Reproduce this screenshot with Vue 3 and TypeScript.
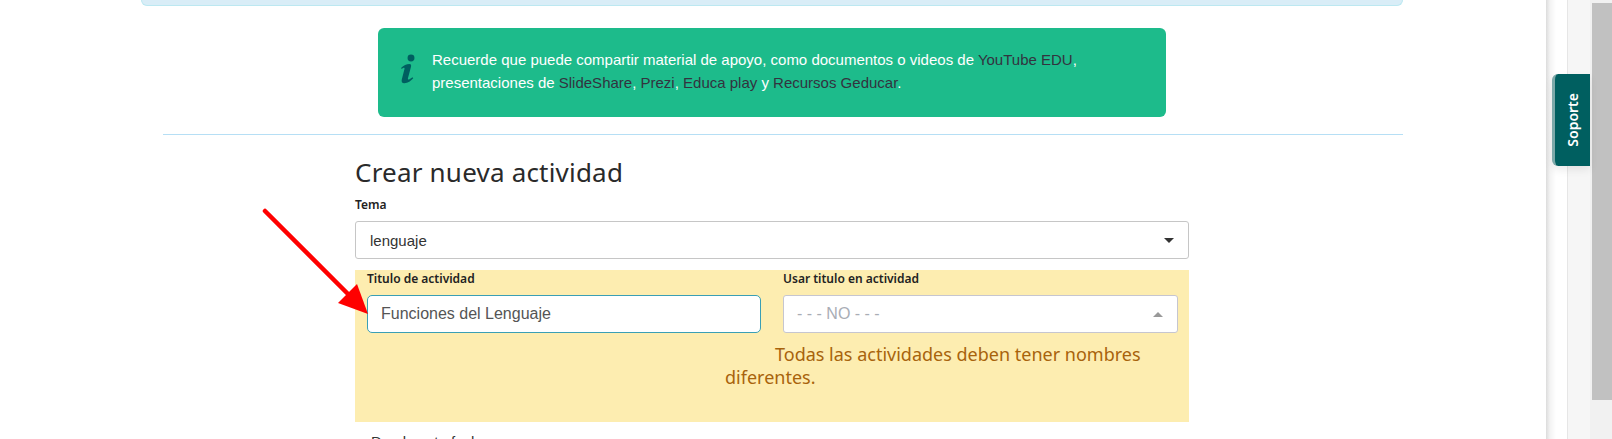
<script setup lang="ts">
const links = { yt: 'YouTube EDU', ss: 'SlideShare', pr: 'Prezi', ed: 'Educa play', rg: 'Recursos Geducar' }
</script>

<template>
  <div class="page">
    <main class="main">
      <div class="top-alert"></div>
      <div class="notice">
        <svg class="info" viewBox="0 0 24 44" aria-hidden="true">
          <circle cx="16" cy="6" r="4.6" fill="#005f60" />
          <path d="M3 19c3-3 7-5 11-5 2 0 2.500 1.500 2 3.500l-4 15c-.5 2 .5 2.500 2 1.700l4-2.700 1 1.500c-3 3.500-7 6.500-12 6.500-3 0-4-2-3.300-5l3.600-14c.4-1.600-.6-2-1.800-1.200l-2.300 1.500z" fill="#005f60" />
        </svg>
        <p class="notice-text">
          Recuerde que puede compartir material de apoyo, como documentos o videos de <a>{{ links.yt }}</a>,<br />
          presentaciones de <a>{{ links.ss }}</a>, <a>{{ links.pr }}</a>, <a>{{ links.ed }}</a> y <a>{{ links.rg }}</a>.
        </p>
      </div>
      <hr class="rule" />
      <section class="form">
        <h2 class="title">Crear nueva actividad</h2>
        <label class="label">Tema</label>
        <div class="select">
          <span>lenguaje</span>
          <i class="caret down"></i>
        </div>
        <div class="highlight">
          <div class="cols">
            <div class="col">
              <label class="label">Titulo de actividad</label>
              <div class="input">Funciones del Lenguaje</div>
            </div>
            <div class="col">
              <label class="label">Usar titulo en actividad</label>
              <div class="input muted">
                <span>- - - NO - - -</span>
                <i class="caret up"></i>
              </div>
            </div>
          </div>
          <p class="help">Todas las actividades deben tener nombres diferentes.</p>
        </div>
        <div class="cut">Desde esta fecha</div>
      </section>
      <svg class="arrow" viewBox="0 0 120 120" aria-hidden="true">
        <line x1="10" y1="11" x2="95" y2="96" stroke="#ff0000" stroke-width="4.500" stroke-linecap="round" />
        <polygon points="113,114 83,103 102,84" fill="#ff0000" />
      </svg>
    </main>
    <aside class="gutter">
      <div class="tab"><span>Soporte</span></div>
    </aside>
    <div class="scrollbar"><div class="thumb"></div></div>
  </div>
</template>

<style>
html, body { margin: 0; padding: 0; background: #fff; overflow: hidden; }
</style>

<style scoped>
.page { display: flex; height: 439px; width: 1612px; overflow: hidden; font-family: "Liberation Sans", Arial, sans-serif; }
.main { position: relative; width: 1546px; flex: none; background: #fff; box-sizing: border-box; }
.top-alert { margin: -10px 0 0 141px; width: 1262px; height: 16px; background: #d9edf7; border: 1px solid #bce8f1; border-top: 0; border-radius: 0 0 6px 6px; box-sizing: border-box; }
.notice { margin: 22px 0 0 378px; width: 788px; height: 89px; background: #1dbb8b; border-radius: 6px; display: flex; align-items: flex-start; padding: 24px 0 0 21px; box-sizing: border-box; }
.info { width: 18px; height: 36px; flex: none; margin-right: 15px; }
.notice-text { margin: -3px 0 0; color: #fff; font-size: 15px; line-height: 22.500px; white-space: nowrap; }
.notice-text a { color: #33333f; }
.rule { margin: 17px 0 0 163px; width: 1240px; border: 0; border-top: 1px solid #b6dff5; height: 0; }
.form { margin-left: 355px; width: 834px; }
.title { margin: 22px 0 0; font: 400 26px/30px "Noto Sans", sans-serif; color: #2a2a2a; letter-spacing: .2px; }
.label { display: block; font: 600 12px/16px "Noto Sans", sans-serif; color: #222; }
.form > .label { margin-top: 10px; }
.select { margin-top: 8px; height: 38px; box-sizing: border-box; border: 1px solid #c6c6c6; border-radius: 3px; display: flex; align-items: center; justify-content: space-between; padding: 0 14px; font: 15px "Liberation Sans", sans-serif; color: #333; background: #fff; }
.caret { width: 0; height: 0; border-left: 5px solid transparent; border-right: 5px solid transparent; }
.caret.down { border-top: 5px solid #333; }
.caret.up { border-bottom: 5px solid #999; }
.highlight { margin-top: 11px; height: 152px; background: #fdedb0; box-sizing: border-box; padding: 1px 11px 0 12px; }
.cols { display: grid; grid-template-columns: 394px 395px; gap: 22px; }
.col .label { height: 24px; line-height: 16px; }
.input { height: 38px; box-sizing: border-box; border: 1px solid #3a9fb5; border-radius: 5px; background: #fff; display: flex; align-items: center; justify-content: space-between; padding: 0 13px; font: 16px "Liberation Sans", sans-serif; color: #555; }
.input.muted { border-color: #c6c6d0; color: #a9adb5; padding-right: 14px; border-radius: 3px; }
.help { margin: 10px 0 0 358px; width: 450px; text-indent: 50px; font: 400 18px/23px "Noto Sans", sans-serif; color: #a8630c; }
.cut { margin: 10px 0 0 16px; font: 400 15px/20px "Liberation Sans", sans-serif; color: #333; }
.arrow { position: absolute; left: 255px; top: 200px; width: 120px; height: 120px; }
.gutter { position: relative; flex: none; width: 44px; background: linear-gradient(90deg, #dcdcdc 0, #f3f3f3 4px, #fff 10px, #fff 21px, #e6e6e6 21px, #e6e6e6 22px, #f6f6f6 22px); box-sizing: border-box; }
.tab { position: absolute; left: 6px; top: 74px; width: 38px; height: 92px; box-sizing: border-box; background: #005f60; border-left: 3px solid #7da9a9; border-radius: 6px 0 0 6px; display: flex; align-items: center; justify-content: center; color: #fff; font: 600 14px "Noto Sans", sans-serif; box-shadow: 0 4px 8px rgba(0,0,0,.08); }
.tab span { writing-mode: vertical-rl; transform: rotate(180deg); }
.scrollbar { flex: none; width: 22px; background: #f1f1f1; padding: 3px 0 0 2px; box-sizing: border-box; }
.thumb { width: 20px; height: 397px; background: #c1c1c1; }
</style>
